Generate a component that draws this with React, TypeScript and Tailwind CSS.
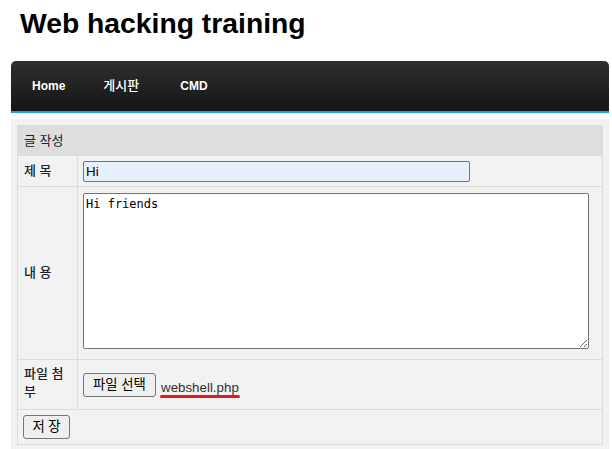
import React from "react";

const navItems = [
  { label: "Home", cls: "ml-[21px] text-[12px] font-bold" },
  { label: "게시판", cls: "ml-[38px] text-[13px] font-medium" },
  { label: "CMD", cls: "ml-[41px] text-[12px] font-bold" },
];

const App = () => {
  return (
    <div className="w-[612px] h-[449px] overflow-hidden bg-white font-['Liberation_Sans','Noto_Sans_CJK_KR',sans-serif] text-[#333]">
      <h1 className="pl-[20px] pt-[9px] text-[28.3px] leading-[28px] font-bold text-black">
        Web hacking training
      </h1>

      {/* top menu */}
      <nav className="ml-[11px] mt-[24px] w-[598px] h-[52px] flex items-center rounded-t-[5px] border-b-2 border-[#1ba1e2] bg-linear-to-b from-[#303030] to-[#151515]">
        {navItems.map((item) => (
          <a key={item.label} className={`${item.cls} text-white`}>
            {item.label}
          </a>
        ))}
      </nav>

      <div className="ml-[11px] mt-[6px] w-[598px] bg-[#f2f2f2] p-[6px]">
        <div className="w-[586px] border border-[#dddddd] text-[13px]">
          <div className="h-[30px] flex items-center pl-[6px] bg-[#dddddd] text-[#222]">
            글 작성
          </div>

          {/* title */}
          <div className="flex h-[31px] border-b border-[#dddddd]">
            <div className="w-[60px] shrink-0 flex items-center pl-[6px] border-r border-[#dddddd] font-medium text-[#222]">
              제 목
            </div>
            <div className="pl-[5px] pt-[5px]">
              <input
                defaultValue="Hi"
                className="block w-[387px] h-[21px] px-[2px] border border-[#767676] rounded-[2px] bg-[#e8f0fe] text-[13.333px] text-black outline-none"
              />
            </div>
          </div>

          {/* content */}
          <div className="flex h-[173px] border-b border-[#dddddd]">
            <div className="w-[60px] shrink-0 flex items-center pl-[6px] border-r border-[#dddddd] font-medium text-[#222]">
              내 용
            </div>
            <div className="pl-[5px] pt-[6px]">
              <textarea
                defaultValue="Hi friends"
                className="block w-[506px] h-[156px] px-[2px] py-[1px] border border-[#767676] rounded-[2px] bg-white font-['DejaVu_Sans_Mono',monospace] text-[12px] text-black outline-none"
              />
            </div>
          </div>

          {/* attachment */}
          <div className="flex h-[50px] border-b border-[#dddddd]">
            <div className="w-[60px] shrink-0 flex flex-col justify-center pl-[6px] pb-[4px] border-r border-[#dddddd] font-medium text-[#222] leading-[18px]">
              <span>파일 첨</span>
              <span>부</span>
            </div>
            <div className="flex items-center pl-[5px]">
              <button className="w-[73px] h-[24px] flex items-center justify-center border border-[#767676] rounded-[3px] bg-[#efefef] text-[13.333px] text-black">
                파일 선택
              </button>
              <span className="relative ml-[5px] mt-[7px] text-[13.333px] text-[#333]">
                webshell.php
                <span className="absolute left-[-1px] top-[17px] w-[80px] h-[3px] rounded-full bg-[#e01b1b]" />
              </span>
            </div>
          </div>

          {/* save */}
          <div className="h-[34px] flex items-center pl-[5px]">
            <button className="w-[47px] h-[24px] flex items-center justify-center border border-[#767676] rounded-[3px] bg-[#efefef] text-[13.333px] text-black">
              저 장
            </button>
          </div>
        </div>
      </div>
    </div>
  );
};

export default App;
